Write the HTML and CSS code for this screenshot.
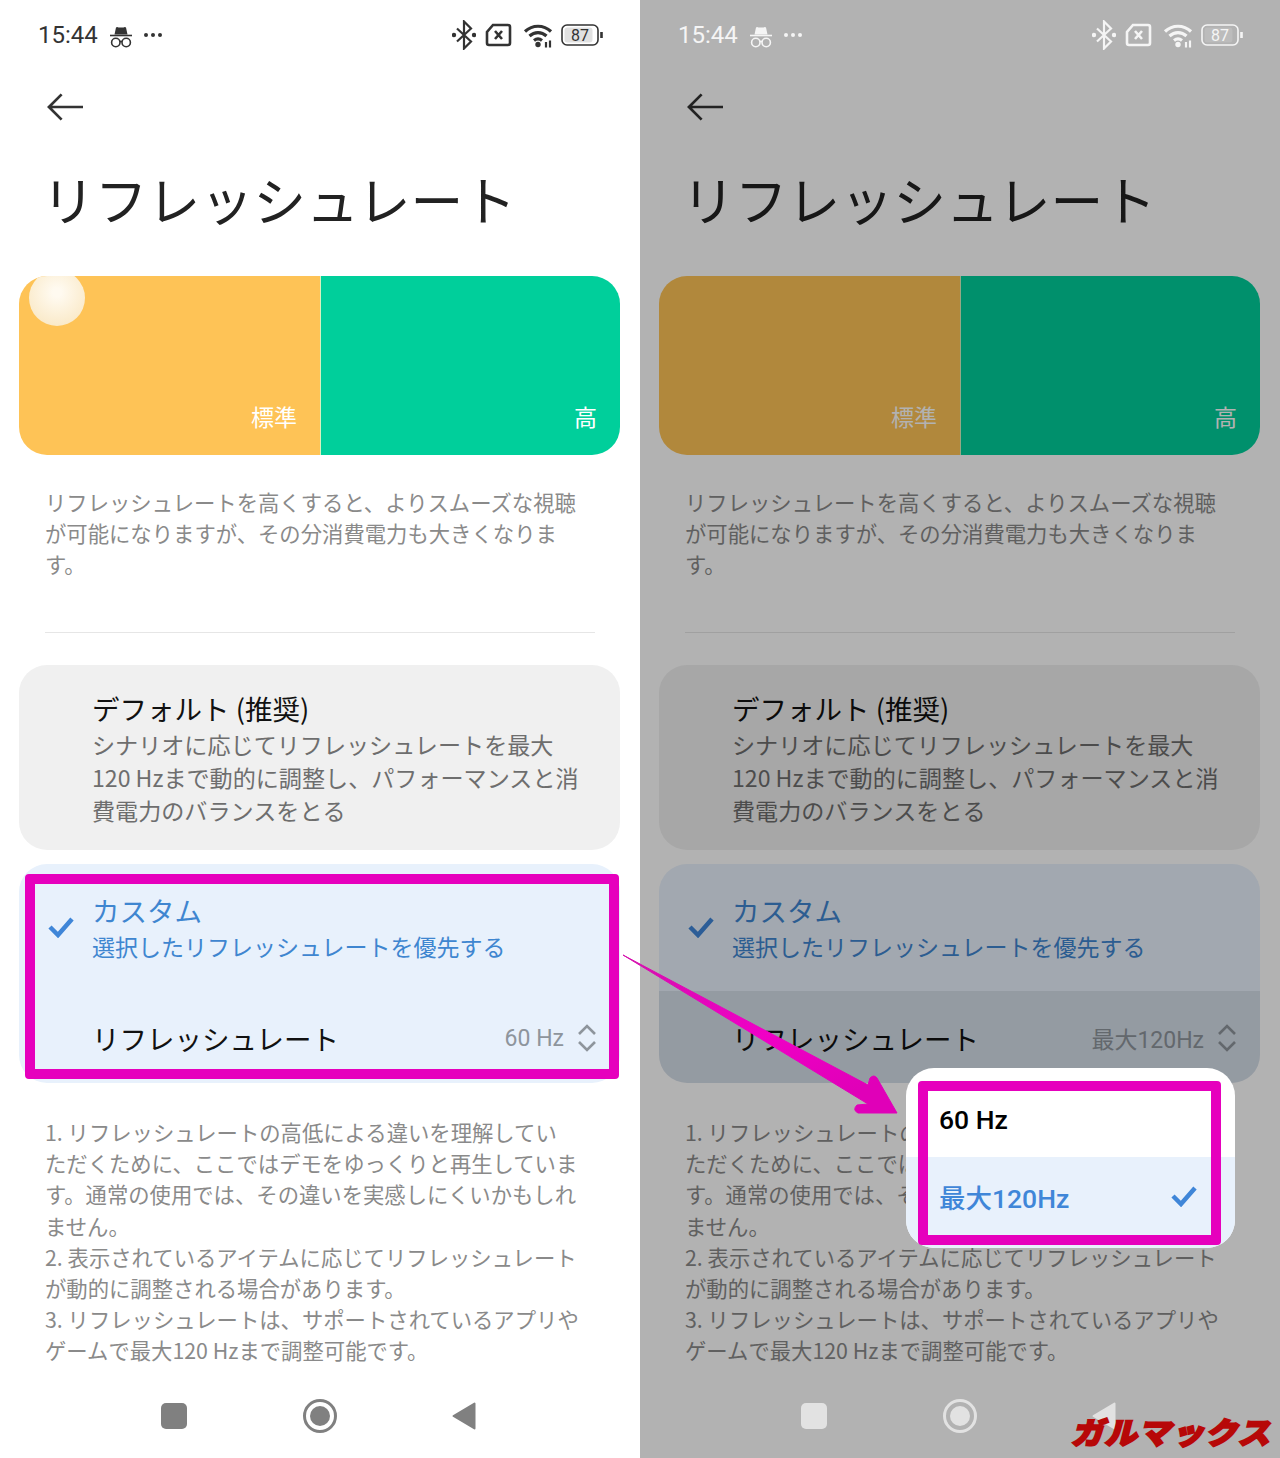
FILE: index.html
```html
<!DOCTYPE html>
<html lang="ja">
<head>
    <meta charset="UTF-8">
    <meta name="viewport" content="width=device-width, initial-scale=1.0">
    <title>リフレッシュレート</title>
    <link rel="stylesheet" href="styles.css">
</head>
<body>
<div class="shots">

    <!-- left: settings page, 60 Hz selected -->
    <div class="phone">
        <div class="status">
            <div class="status-left">
                <span class="clock">15:44</span>
                <svg class="ico-spy" viewBox="0 0 22 22"><path class="fill" d="M6 1.500q1-.8 2.500 0h5q1.500-.8 2.500 0l1.500 7h-13z"/><path class="line" d="M0 9.500h22"/><circle class="line" cx="5.800" cy="16.500" r="4.200"/><circle class="line" cx="16.200" cy="16.500" r="4.200"/><path class="line" d="M10 15.500h2"/></svg>
                <span class="dots"><i></i><i></i><i></i></span>
            </div>
            <div class="status-right">
                <svg class="ico-bt" viewBox="0 0 24 30"><path class="line mid" d="M5 8.500l14 13-7 7v-27l7 7-14 13"/><circle class="fill" cx="2" cy="15" r="2.200"/><circle class="fill" cx="22" cy="15" r="2.200"/></svg>
                <svg class="ico-sim" viewBox="0 0 27 24"><path class="line thick" d="M8 2h15a2 2 0 0 1 2 2v16a2 2 0 0 1-2 2H4a2 2 0 0 1-2-2V9z"/><path class="line thick" d="M10 8l7 8M17 8l-7 8"/></svg>
                <svg class="ico-wifi" viewBox="0 0 30 26"><path class="line wide" d="M2 9.500c7.500-7 18.500-7 26 0M6.500 14c5-4.500 12-4.500 17 0M11 18.500c2.500-2 5.500-2 8 0"/><circle class="fill" cx="15" cy="22.500" r="2.700"/><path class="line mid" d="M23 20v5.500M27 18.500v7"/></svg>
                <svg class="ico-batt" viewBox="0 0 42 22"><rect class="line" x="1" y="1" width="36" height="20" rx="5"/><rect class="fill soft" x="3.500" y="3.500" width="28" height="15" rx="3"/><text x="19" y="17" text-anchor="middle">87</text><path class="line thick" d="M40.500 8v6"/></svg>
            </div>
        </div>

        <div class="appbar">
            <svg class="ico-back" viewBox="0 0 38 30"><path d="M37 15H2M15 2L2 15l13 13"/></svg>
        </div>

        <h1 class="title">リフレッシュレート</h1>

        <div class="demo">
            <div class="demo-side demo-normal"><span class="ball"></span>標準</div>
            <div class="demo-side demo-high">高</div>
        </div>

        <p class="desc">リフレッシュレートを高くすると、よりスムーズな視聴<br>が可能になりますが、その分消費電力も大きくなりま<br>す。</p>
        <div class="divider"></div>

        <div class="option option-default">
            <div class="option-title">デフォルト (推奨)</div>
            <div class="option-sub">シナリオに応じてリフレッシュレートを最大<br>120 Hzまで動的に調整し、パフォーマンスと消<br>費電力のバランスをとる</div>
        </div>

        <div class="option option-custom">
            <div class="custom-top">
                <svg class="ico-check check-side" viewBox="0 0 26 22"><path d="M2 11l8 8L24 3"/></svg>
                <div class="option-title">カスタム</div>
                <div class="option-sub">選択したリフレッシュレートを優先する</div>
            </div>
            <div class="custom-row">
                <span class="row-label">リフレッシュレート</span>
                <span class="row-value">60 Hz</span>
                <svg class="ico-updown" viewBox="0 0 20 28"><path d="M2 10l8-8 8 8M2 18l8 8 8-8"/></svg>
            </div>
        </div>

        <div class="notes">1. リフレッシュレートの高低による違いを理解してい<br>ただくために、ここではデモをゆっくりと再生していま<br>す。通常の使用では、その違いを実感しにくいかもしれ<br>ません。<br>2. 表示されているアイテムに応じてリフレッシュレート<br>が動的に調整される場合があります。<br>3. リフレッシュレートは、サポートされているアプリや<br>ゲームで最大120 Hzまで調整可能です。</div>

        <div class="navbar">
            <span class="nav-square"></span>
            <span class="nav-circle"><i></i></span>
            <svg class="nav-back" viewBox="0 0 24 28"><path d="M22.500 1.500v25L1.500 14z"/></svg>
        </div>

        <div class="mark mark-left"></div>
    </div>

    <!-- right: same page dimmed with the value menu open -->
    <div class="phone phone-dim">
        <div class="status">
            <div class="status-left">
                <span class="clock">15:44</span>
                <svg class="ico-spy" viewBox="0 0 22 22"><path class="fill" d="M6 1.500q1-.8 2.500 0h5q1.500-.8 2.500 0l1.500 7h-13z"/><path class="line" d="M0 9.500h22"/><circle class="line" cx="5.800" cy="16.500" r="4.200"/><circle class="line" cx="16.200" cy="16.500" r="4.200"/><path class="line" d="M10 15.500h2"/></svg>
                <span class="dots"><i></i><i></i><i></i></span>
            </div>
            <div class="status-right">
                <svg class="ico-bt" viewBox="0 0 24 30"><path class="line mid" d="M5 8.500l14 13-7 7v-27l7 7-14 13"/><circle class="fill" cx="2" cy="15" r="2.200"/><circle class="fill" cx="22" cy="15" r="2.200"/></svg>
                <svg class="ico-sim" viewBox="0 0 27 24"><path class="line thick" d="M8 2h15a2 2 0 0 1 2 2v16a2 2 0 0 1-2 2H4a2 2 0 0 1-2-2V9z"/><path class="line thick" d="M10 8l7 8M17 8l-7 8"/></svg>
                <svg class="ico-wifi" viewBox="0 0 30 26"><path class="line wide" d="M2 9.500c7.500-7 18.500-7 26 0M6.500 14c5-4.500 12-4.500 17 0M11 18.500c2.500-2 5.500-2 8 0"/><circle class="fill" cx="15" cy="22.500" r="2.700"/><path class="line mid" d="M23 20v5.500M27 18.500v7"/></svg>
                <svg class="ico-batt" viewBox="0 0 42 22"><rect class="line" x="1" y="1" width="36" height="20" rx="5"/><rect class="fill soft" x="3.500" y="3.500" width="28" height="15" rx="3"/><text x="19" y="17" text-anchor="middle">87</text><path class="line thick" d="M40.500 8v6"/></svg>
            </div>
        </div>

        <div class="appbar">
            <svg class="ico-back" viewBox="0 0 38 30"><path d="M37 15H2M15 2L2 15l13 13"/></svg>
        </div>

        <h1 class="title">リフレッシュレート</h1>

        <div class="demo">
            <div class="demo-side demo-normal">標準</div>
            <div class="demo-side demo-high">高</div>
        </div>

        <p class="desc">リフレッシュレートを高くすると、よりスムーズな視聴<br>が可能になりますが、その分消費電力も大きくなりま<br>す。</p>
        <div class="divider"></div>

        <div class="option option-default">
            <div class="option-title">デフォルト (推奨)</div>
            <div class="option-sub">シナリオに応じてリフレッシュレートを最大<br>120 Hzまで動的に調整し、パフォーマンスと消<br>費電力のバランスをとる</div>
        </div>

        <div class="option option-custom">
            <div class="custom-top">
                <svg class="ico-check check-side" viewBox="0 0 26 22"><path d="M2 11l8 8L24 3"/></svg>
                <div class="option-title">カスタム</div>
                <div class="option-sub">選択したリフレッシュレートを優先する</div>
            </div>
            <div class="custom-row pressed">
                <span class="row-label">リフレッシュレート</span>
                <span class="row-value">最大120Hz</span>
                <svg class="ico-updown" viewBox="0 0 20 28"><path d="M2 10l8-8 8 8M2 18l8 8 8-8"/></svg>
            </div>
        </div>

        <div class="notes">1. リフレッシュレートの高低による違いを理解してい<br>ただくために、ここではデモをゆっくりと再生していま<br>す。通常の使用では、その違いを実感しにくいかもしれ<br>ません。<br>2. 表示されているアイテムに応じてリフレッシュレート<br>が動的に調整される場合があります。<br>3. リフレッシュレートは、サポートされているアプリや<br>ゲームで最大120 Hzまで調整可能です。</div>

        <div class="navbar">
            <span class="nav-square"></span>
            <span class="nav-circle"><i></i></span>
            <svg class="nav-back" viewBox="0 0 24 28"><path d="M22.500 1.500v25L1.500 14z"/></svg>
        </div>

        <div class="scrim"></div>

        <div class="menu">
            <div class="menu-item">60 Hz</div>
            <div class="menu-item menu-item-on">最大120Hz
                <svg class="ico-check" viewBox="0 0 26 22"><path d="M2 11l8 8L24 3"/></svg>
            </div>
        </div>
        <div class="mark mark-menu"></div>
        <div class="logo">ガルマックス</div>
    </div>

    <svg class="arrow" viewBox="0 0 300 180">
        <defs>
            <linearGradient id="arrowfill" x1="0" y1="0" x2="0.6" y2="1">
                <stop offset="0" stop-color="#d410ac"/>
                <stop offset="0.6" stop-color="#f000c6"/>
                <stop offset="1" stop-color="#e000b8"/>
            </linearGradient>
        </defs>
        <path fill="url(#arrowfill)" stroke="url(#arrowfill)" stroke-width="1" stroke-linejoin="round" d="M3 5L248 135L250 128Q254 124 257 128L277 163L238 163Q232 160 237 155L248 154Z"/>
    </svg>
</div>
</body>
</html>
```

FILE: styles.css
```css
* {box-sizing: border-box;}

body {
    margin: 0;
    font-family: "Noto Sans CJK JP", sans-serif;
    background: #fff;
}

.shots {
    display: flex;
    position: relative;
    width: 1280px;
    height: 1458px;
    overflow: hidden;
}

.phone {
    position: relative;
    width: 640px;
    height: 1458px;
    background: #fff;
    color: #222;
    --icon: #333;
}

.phone-dim {
    --icon: #f5f5f5;
}

/* status bar */
.status {
    display: flex;
    justify-content: space-between;
    align-items: center;
    height: 70px;
    padding: 0 38px;
    color: var(--icon);
    position: relative;
    z-index: 2;
}

.status-left, .status-right {
    display: flex;
    align-items: center;
}

.clock {
    font-family: Roboto, sans-serif;
    font-size: 24px;
    margin-right: 12px;
}

.ico-spy {width: 22px; height: 22px; margin-right: 12px; margin-top: 3px;}

.dots {display: flex; gap: 3px; margin-bottom: 1px;}
.dots i {width: 4px; height: 4px; border-radius: 50%; background: var(--icon);}

.line {fill: none; stroke: var(--icon); stroke-width: 1.6;}
.mid {stroke-width: 2.2;}
.thick {stroke-width: 2.6;}
.wide {stroke-width: 3.2;}
.fill {fill: var(--icon);}
.soft {opacity: .15;}

.status-right {margin-right: -1px;}
.ico-bt {width: 24px; height: 30px; margin-right: 9px;}
.ico-sim {width: 27px; height: 24px; margin-right: 11px;}
.ico-wifi {width: 30px; height: 26px; margin-right: 8px;}
.ico-batt {width: 42px; height: 22px;}
.ico-batt text {font-family: Roboto, sans-serif; font-size: 16px; fill: var(--icon);}

/* app bar */
.appbar {
    height: 74px;
    padding: 22px 0 0 47px;
}

.ico-back {width: 37px; height: 30px; display: block;}
.ico-back path {fill: none; stroke: #333; stroke-width: 2.8;}

.title {
    margin: 0 0 0 42px;
    font-size: 52.8px;
    line-height: 76px;
    font-weight: 400;
    height: 132px;
    padding-top: 16px;
}

/* refresh demo */
.demo {
    display: flex;
    margin: 0 20px 0 19px;
    height: 179px;
    border-radius: 28px;
    overflow: hidden;
    position: relative;
}

.demo-side {
    flex: 1;
    display: flex;
    justify-content: flex-end;
    align-items: flex-end;
    padding: 0 23px 21px 0;
    color: #fff;
    font-size: 23px;
    line-height: 36px;
}

.demo-normal {
    flex: 0 0 302px;
    background: #fec356;
    border-right: 1px solid #d9f0c0;
    position: relative;
}

.demo-high {background: #00cf9b;}

.ball {
    position: absolute;
    left: 10px;
    top: -6px;
    width: 56px;
    height: 56px;
    border-radius: 50%;
    background: radial-gradient(circle at 50% 40%, #fffaf0 10%, #f8e4bb 100%);
}

.desc {
    margin: 31px 0 0 45px;
    font-size: 21.35px;
    line-height: 31.2px;
    color: #8a8a8a;
    height: 96px;
}

.divider {
    margin: 50px 45px 32px;
    height: 1px;
    background: #e6e6e6;
}

/* options */
.option {
    margin: 0 20px 0 19px;
    border-radius: 28px;
    overflow: hidden;
}

.option-default {
    background: #f0f0f0;
    height: 185px;
    padding: 24px 0 0 73px;
    margin-bottom: 14px;
}

.option-title {
    font-size: 27.5px;
    line-height: 39px;
    color: #111;
}

.option-sub {
    font-size: 23.1px;
    line-height: 33px;
    color: #6e6e6e;
}

.option-custom {
    background: #e8f1fc;
    height: 219px;
}

.custom-top {
    position: relative;
    height: 127px;
    padding: 26px 0 0 73px;
}

.custom-top .option-title {
    line-height: 40px;
    color: #3f86d0;
}

.custom-top .option-sub {
    font-size: 23px;
    color: #3f86d0;
}

.ico-check path {fill: none; stroke: #3f86d8; stroke-width: 4.5;}
.ico-check {width: 26px; height: 22px;}

.check-side {
    position: absolute;
    left: 29px;
    top: 52px;
}

.custom-row {
    display: flex;
    align-items: center;
    height: 92px;
    padding: 2px 23px 0 73px;
}

.custom-row.pressed {background: rgba(0, 0, 0, .08);}

.row-label {
    flex: 1;
    font-size: 27.5px;
    color: #111;
}

.row-value {
    font-family: Roboto, "Noto Sans CJK JP", sans-serif;
    font-size: 23px;
    color: #8e959c;
    margin-right: 13px;
}

.ico-updown {width: 20px; height: 28px;}
.ico-updown path {fill: none; stroke: #8e959c; stroke-width: 2.6;}

.notes {
    margin: 33px 0 0 45px;
    font-size: 21.35px;
    line-height: 31.2px;
    color: #8a8a8a;
}

/* nav bar */
.navbar {
    position: absolute;
    left: 0;
    right: 0;
    bottom: 0;
    height: 84px;
    z-index: 2;
    display: flex;
    justify-content: center;
    align-items: center;
    gap: 116px;
    padding-right: 3px;
    --nav: #808080;
}

.phone-dim .navbar {--nav: #e2e2e2;}

.nav-square {
    width: 26px;
    height: 26px;
    border-radius: 5px;
    background: var(--nav);
}

.nav-circle {
    display: flex;
    justify-content: center;
    align-items: center;
    width: 34px;
    height: 34px;
    border-radius: 50%;
    border: 3px solid var(--nav);
}

.nav-circle i {
    width: 20px;
    height: 20px;
    border-radius: 50%;
    background: var(--nav);
}

.nav-back {width: 24px; height: 28px; margin-left: -1px;}
.nav-back path {fill: var(--nav); stroke: var(--nav); stroke-width: 2; stroke-linejoin: round;}

.scrim {
    position: absolute;
    inset: 0;
    background: rgba(0, 0, 0, .3);
    z-index: 1;
}

/* popup menu */
.menu {
    position: absolute;
    left: 266px;
    top: 1068px;
    width: 329px;
    height: 180px;
    background: #fff;
    border-radius: 28px;
    overflow: hidden;
    z-index: 2;
}

.menu-item {
    display: flex;
    align-items: center;
    justify-content: space-between;
    height: 89px;
    padding: 14px 38px 0 33px;
    font-family: Roboto, "Noto Sans CJK JP", sans-serif;
    font-size: 26.5px;
    font-weight: 500;
    color: #000;
}

.menu-item-on {
    height: 91px;
    padding: 0 38px 13px 33px;
    color: #3f86d8;
    background: #e8f1fc;
}

/* magenta annotation boxes */
.mark {
    position: absolute;
    border: 10px solid #e600bd;
    border-radius: 4px;
    z-index: 3;
}

.mark-left {left: 25px; top: 874px; width: 594px; height: 205px;}
.mark-menu {left: 278px; top: 1081px; width: 303px; height: 164px;}

.arrow {
    position: absolute;
    left: 620px;
    top: 950px;
    width: 300px;
    height: 180px;
    z-index: 4;
}

.logo {
    position: absolute;
    right: 6px;
    bottom: 11px;
    z-index: 5;
    font-size: 30px;
    line-height: 32px;
    font-weight: 900;
    color: #b70808;
    letter-spacing: 1px;
    transform: skewX(-14deg) scaleX(1.08);
    transform-origin: right center;
    -webkit-text-stroke: 2px #b70808;
}
```
